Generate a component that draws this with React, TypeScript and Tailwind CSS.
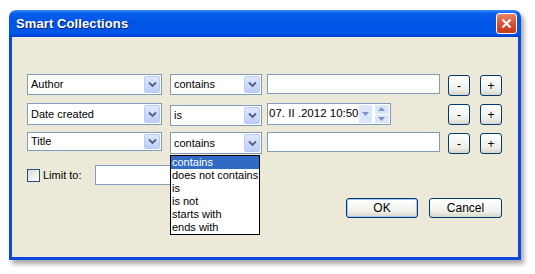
import { useState } from 'react';

const FONT = '"Liberation Sans", Tahoma, Arial, sans-serif';

const Chevron = () => (
  <svg width="9" height="7" viewBox="0 0 9 7">
    <path d="M1 1.5 L4.5 5 L8 1.5" fill="none" stroke="#4D6185" strokeWidth="1.8" />
  </svg>
);

const Combo = ({ label, w, h = 21 }: { label: string; w: number; h?: number }) => (
  <div
    className="flex items-stretch bg-white border border-[#7F9DB9] p-[1px]"
    style={{ width: w, height: h }}
  >
    <div className="flex-1 flex items-center pl-[2px] text-[11px] text-black leading-none">{label}</div>
    <div className="w-[16px] flex items-center justify-center rounded-[2px] border border-[#B9CBF3] bg-[linear-gradient(to_bottom,#E0E8FD,#BCCDF8)]">
      <Chevron />
    </div>
  </div>
);

const SmallButton = ({ label }: { label: string }) => (
  <div className="w-[22px] h-[21px] flex items-center justify-center rounded-[3px] border border-[#003C74] bg-[linear-gradient(to_bottom,#FFFFFF,#F0F0EA_70%,#D8D5C8)] text-[12px] text-black">
    {label}
  </div>
);

export default function App() {
  const [limit] = useState(false);
  const items = ['contains', 'does not contains', 'is', 'is not', 'starts with', 'ends with'];

  return (
    <div className="w-[535px] h-[274px] bg-white overflow-hidden" style={{ fontFamily: FONT }}>
      <div className="ml-[9px] mt-[10px] w-[512px] h-[250px] flex flex-col rounded-t-[7px] shadow-[3px_4px_5px_rgba(0,0,0,0.35)]">
        {/* Title bar */}
        <div className="h-[27px] flex items-center justify-between pl-[7px] pr-[4px] rounded-t-[7px] bg-[linear-gradient(to_bottom,#3D8EFB_0%,#0A5EEE_12%,#0054E3_45%,#0058E8_85%,#003FD3_100%)]">
          <span className="text-white text-[13px] font-bold tracking-[0.1px] [text-shadow:1px_1px_0_#0A1E80]">
            Smart Collections
          </span>
          <div className="w-[21px] h-[21px] flex items-center justify-center rounded-[3px] border border-white bg-[linear-gradient(to_bottom,#E8866A,#D8462B_60%,#C23B20)]">
            <svg width="11" height="11" viewBox="0 0 11 11">
              <path d="M1.5 1.5 L9.5 9.5 M9.5 1.5 L1.5 9.5" stroke="white" strokeWidth="2.2" />
            </svg>
          </div>
        </div>

        {/* Body */}
        <div className="relative flex-1 bg-[#ECE9D8] border-x-[3px] border-b-[3px] border-[#0A48E0] pl-[15px] pt-[37px]">
          {/* Row 1 */}
          <div className="flex items-start h-[21px]">
            <Combo label="Author" w={135} />
            <div className="w-[8px]" />
            <Combo label="contains" w={92} />
            <div className="w-[5px]" />
            <div className="w-[173px] h-[20px] bg-white border border-[#7F9DB9]" />
            <div className="w-[8px]" />
            <div className="mt-[1px] flex gap-[10px]">
              <SmallButton label="-" />
              <SmallButton label="+" />
            </div>
          </div>

          {/* Row 2 */}
          <div className="flex items-start h-[21px] mt-[8px]">
            <Combo label="Date created" w={135} h={22} />
            <div className="w-[8px]" />
            <div className="mt-[2px]">
              <Combo label="is" w={92} />
            </div>
            <div className="w-[5px]" />
            <div className="w-[124px] h-[22px] flex items-center bg-white border border-[#7F9DB9] p-[1px]">
              <span className="flex-1 text-[11.5px] text-black leading-none whitespace-nowrap">07. II .2012 10:50</span>
              <div className="w-[14px] h-full flex items-center justify-center bg-[#DCE6FB]">
                <svg width="7" height="4" viewBox="0 0 7 4"><path d="M0 0 L7 0 L3.5 4Z" fill="#7D95C6" /></svg>
              </div>
              <div className="w-[3px]" />
              <div className="w-[15px] h-full flex flex-col">
                <div className="flex-1 flex items-center justify-center bg-[#DCE6FB] border-b border-white">
                  <svg width="7" height="4" viewBox="0 0 7 4"><path d="M0 4 L7 4 L3.5 0Z" fill="#7D95C6" /></svg>
                </div>
                <div className="flex-1 flex items-center justify-center bg-[#DCE6FB]">
                  <svg width="7" height="4" viewBox="0 0 7 4"><path d="M0 0 L7 0 L3.5 4Z" fill="#7D95C6" /></svg>
                </div>
              </div>
            </div>
            <div className="w-[57px]" />
            <div className="mt-[1px] flex gap-[10px]">
              <SmallButton label="-" />
              <SmallButton label="+" />
            </div>
          </div>

          {/* Row 3 */}
          <div className="flex items-start h-[21px] mt-[8px]">
            <Combo label="Title" w={135} h={19} />
            <div className="w-[8px]" />
            <Combo label="contains" w={92} h={22} />
            <div className="w-[5px]" />
            <div className="w-[173px] h-[20px] bg-white border border-[#7F9DB9]" />
            <div className="w-[8px]" />
            <div className="mt-[1px] flex gap-[10px]">
              <SmallButton label="-" />
              <SmallButton label="+" />
            </div>
          </div>

          {/* Limit row */}
          <div className="flex items-center mt-[12px] h-[20px]">
            <div className={`w-[13px] h-[13px] border border-[#1C5180] ${limit ? 'bg-white' : 'bg-[linear-gradient(135deg,#DCDCD7,#FFFFFF)]'}`} />
            <span className="ml-[3px] text-[11px] text-black">Limit to:</span>
            <div className="ml-[13px] w-[160px] h-[20px] bg-white border border-[#7F9DB9]" />
          </div>

          {/* OK / Cancel */}
          <div className="flex justify-end gap-[11px] pr-[16px] mt-[13px]">
            <div className="w-[72px] h-[20px] flex items-center justify-center rounded-[3px] border border-[#003C74] bg-[linear-gradient(to_bottom,#FFFFFF,#F0F0EA_70%,#D8D5C8)] shadow-[inset_0_0_0_1px_#A9C4F5] text-[12px] text-black">
              OK
            </div>
            <div className="w-[73px] h-[20px] flex items-center justify-center rounded-[3px] border border-[#003C74] bg-[linear-gradient(to_bottom,#FFFFFF,#F0F0EA_70%,#D8D5C8)] text-[12px] text-black">
              Cancel
            </div>
          </div>

          {/* Open dropdown list */}
          <div className="absolute left-[158px] top-[118px] w-[90px] bg-white border border-black">
            {items.map((it, i) => (
              <div
                key={it}
                className={`h-[13px] pl-[1px] flex items-center text-[11px] leading-none whitespace-nowrap ${
                  i === 0 ? 'bg-[#316AC5] text-white' : 'text-black'
                }`}
              >
                {it}
              </div>
            ))}
          </div>
        </div>
      </div>
    </div>
  );
}
